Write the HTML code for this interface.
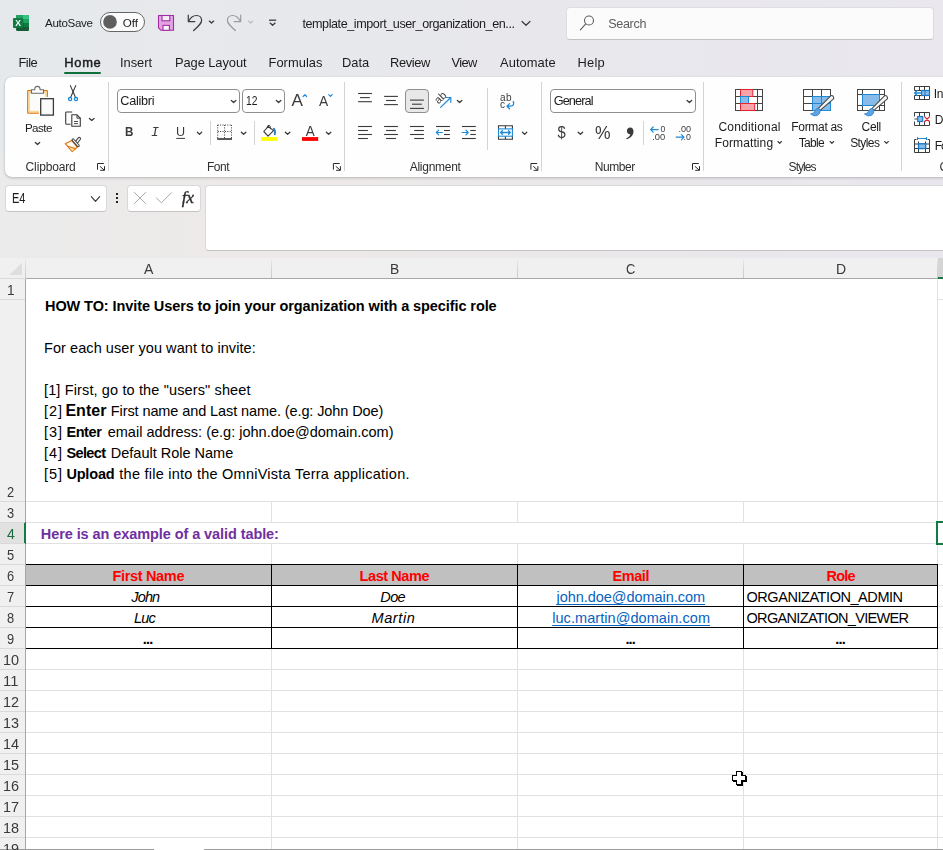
<!DOCTYPE html>
<html lang="en">
<head>
<meta charset="utf-8">
<title>template_import_user_organization_en - Excel</title>
<style>
html,body{margin:0;padding:0;background:#fff;}
body{font-family:"Liberation Sans",sans-serif;}
#app{position:relative;width:943px;height:850px;overflow:hidden;background:linear-gradient(90deg,#e6e9eb 0%,#e8e8ec 55%,#eae7ef 100%);}
#fbar{position:absolute;left:0;top:150px;width:943px;height:108px;-webkit-mask-image:linear-gradient(to bottom,transparent 0,#000 30px);mask-image:linear-gradient(to bottom,transparent 0,#000 30px);background:linear-gradient(90deg,#ebebeb 0%,#ede9e8 30%,#ebe8ea 60%,#e9e6ee 100%);}
.t{position:absolute;white-space:nowrap;font-family:"Liberation Sans",sans-serif;margin:0;padding:0;}
a.t{cursor:pointer;}
#uitext{position:absolute;left:0;top:0;width:943px;height:258px;will-change:transform;}
#celltext{position:absolute;left:0;top:0;width:943px;height:850px;}
.abs{position:absolute;}
.ico{position:absolute;left:0;top:0;will-change:transform;}
</style>
</head>
<body>

<div id="app">
<div id="fbar"></div>
<!-- ribbon panel -->
<div class="abs" style="left:5px;top:77px;width:960px;height:100px;background:#fefefe;border-radius:7px 0 0 7px;box-shadow:0 1px 3px rgba(0,0,0,.22),0 0 1px rgba(0,0,0,.12)"></div>
<div class="abs" style="left:64.3px;top:72px;width:37px;height:2px;border-radius:1px;background:#0f7039"></div>
<div class="abs" style="left:566px;top:7px;width:366px;height:31px;background:#fbfbfb;border-radius:4px;border:1px solid #dddde0;border-bottom-color:#c2c2c6;box-sizing:content-box"></div>
<div class="abs" style="left:5px;top:185px;width:100px;height:25px;background:#fff;border-radius:4px;border:1px solid #d9d9d9;border-bottom-color:#c4c4c4;box-sizing:content-box"></div>
<div class="abs" style="left:127px;top:185px;width:72px;height:25px;background:#fff;border-radius:4px;border:1px solid #d9d9d9;border-bottom-color:#c4c4c4;box-sizing:content-box"></div>
<div class="abs" style="left:205px;top:185px;width:760px;height:64px;background:#fff;border-radius:4px 0 0 4px;border:1px solid #d9d9d9;border-bottom-color:#c4c4c4;box-sizing:content-box"></div>
<div class="abs" style="left:117px;top:89px;width:120.5px;height:22px;background:#fff;border-radius:4px;border:1px solid #8f8f8f;box-sizing:content-box"></div>
<div class="abs" style="left:242px;top:89px;width:40.5px;height:22px;background:#fff;border-radius:4px;border:1px solid #8f8f8f;box-sizing:content-box"></div>
<div class="abs" style="left:550px;top:89px;width:144px;height:22px;background:#fff;border-radius:4px;border:1px solid #8f8f8f;box-sizing:content-box"></div>
<div class="abs" style="left:405px;top:89px;width:22px;height:22px;background:#e8e8e8;border-radius:4px;border:1px solid #8f8f8f;box-sizing:content-box"></div>
<div class="abs" style="left:108px;top:82px;width:1px;height:89px;background:#d4d4d4"></div>
<div class="abs" style="left:344px;top:82px;width:1px;height:89px;background:#d4d4d4"></div>
<div class="abs" style="left:541px;top:82px;width:1px;height:89px;background:#d4d4d4"></div>
<div class="abs" style="left:703px;top:82px;width:1px;height:89px;background:#d4d4d4"></div>
<div class="abs" style="left:901px;top:82px;width:1px;height:89px;background:#d4d4d4"></div>
<div class="abs" style="left:210px;top:121px;width:1px;height:24px;background:#d4d4d4"></div>
<div class="abs" style="left:254px;top:121px;width:1px;height:24px;background:#d4d4d4"></div>
<div class="abs" style="left:643px;top:121px;width:1px;height:24px;background:#d4d4d4"></div>
<div class="abs" style="left:487px;top:88px;width:1px;height:62px;background:#d4d4d4"></div>
<!-- sheet -->
<div class="abs" style="left:0;top:258px;width:943px;height:20px;background:#f0f0f0"></div>
<div class="abs" style="left:938px;top:258px;width:5px;height:20px;background:#d5d5d5"></div>
<div class="abs" style="left:0;top:278px;width:26px;height:1px;background:#dcdcdc"></div>
<div class="abs" style="left:26px;top:278px;width:917px;height:1px;background:#a8a8a8"></div>
<div class="abs" style="left:938px;top:277px;width:5px;height:2px;background:#107c41"></div>
<div class="abs" style="left:25px;top:259px;width:1px;height:19px;background:linear-gradient(#eaeaea,#d2d2d2 60%,#cacaca)"></div>
<div class="abs" style="left:271px;top:259px;width:1px;height:19px;background:linear-gradient(#eaeaea,#d2d2d2 60%,#cacaca)"></div>
<div class="abs" style="left:517px;top:259px;width:1px;height:19px;background:linear-gradient(#eaeaea,#d2d2d2 60%,#cacaca)"></div>
<div class="abs" style="left:743px;top:259px;width:1px;height:19px;background:linear-gradient(#eaeaea,#d2d2d2 60%,#cacaca)"></div>
<div class="abs" style="left:937px;top:259px;width:1px;height:19px;background:linear-gradient(#eaeaea,#d2d2d2 60%,#cacaca)"></div>
<svg class="abs" style="left:9px;top:262px" width="14" height="14" viewBox="0 0 14 14"><path d="M13 0.4V13H0.4Z" fill="#dedede"/></svg>
<div class="abs" style="left:26px;top:279px;width:917px;height:571px;background:#fff"></div>
<div class="abs" style="left:0;top:279px;width:25px;height:571px;background:#f0f0f0"></div>
<div class="abs" style="left:0;top:523px;width:25px;height:20px;background:#e1e1e1"></div>
<div class="abs" style="left:25px;top:279px;width:1px;height:571px;background:#a6a6a6"></div>
<div class="abs" style="left:24px;top:522px;width:2px;height:22px;background:#107c41"></div>
<div class="abs" style="left:0;top:299px;width:25px;height:1px;background:#d9d9d9"></div>
<div class="abs" style="left:0;top:501px;width:25px;height:1px;background:#d9d9d9"></div>
<div class="abs" style="left:0;top:522px;width:25px;height:1px;background:#d9d9d9"></div>
<div class="abs" style="left:0;top:543px;width:25px;height:1px;background:#d9d9d9"></div>
<div class="abs" style="left:0;top:564px;width:25px;height:1px;background:#d9d9d9"></div>
<div class="abs" style="left:0;top:585px;width:25px;height:1px;background:#d9d9d9"></div>
<div class="abs" style="left:0;top:606px;width:25px;height:1px;background:#d9d9d9"></div>
<div class="abs" style="left:0;top:627px;width:25px;height:1px;background:#d9d9d9"></div>
<div class="abs" style="left:0;top:648px;width:25px;height:1px;background:#d9d9d9"></div>
<div class="abs" style="left:0;top:669px;width:25px;height:1px;background:#d9d9d9"></div>
<div class="abs" style="left:0;top:690px;width:25px;height:1px;background:#d9d9d9"></div>
<div class="abs" style="left:0;top:711px;width:25px;height:1px;background:#d9d9d9"></div>
<div class="abs" style="left:0;top:732px;width:25px;height:1px;background:#d9d9d9"></div>
<div class="abs" style="left:0;top:753px;width:25px;height:1px;background:#d9d9d9"></div>
<div class="abs" style="left:0;top:774px;width:25px;height:1px;background:#d9d9d9"></div>
<div class="abs" style="left:0;top:795px;width:25px;height:1px;background:#d9d9d9"></div>
<div class="abs" style="left:0;top:816px;width:25px;height:1px;background:#d9d9d9"></div>
<div class="abs" style="left:0;top:837px;width:25px;height:1px;background:#d9d9d9"></div>
<div class="abs" style="left:938px;top:299px;width:5px;height:1px;background:#e1e1e1"></div>
<div class="abs" style="left:26px;top:501px;width:917px;height:1px;background:#e1e1e1"></div>
<div class="abs" style="left:26px;top:522px;width:917px;height:1px;background:#e1e1e1"></div>
<div class="abs" style="left:26px;top:543px;width:917px;height:1px;background:#e1e1e1"></div>
<div class="abs" style="left:26px;top:564px;width:917px;height:1px;background:#e1e1e1"></div>
<div class="abs" style="left:26px;top:585px;width:917px;height:1px;background:#e1e1e1"></div>
<div class="abs" style="left:26px;top:606px;width:917px;height:1px;background:#e1e1e1"></div>
<div class="abs" style="left:26px;top:627px;width:917px;height:1px;background:#e1e1e1"></div>
<div class="abs" style="left:26px;top:648px;width:917px;height:1px;background:#e1e1e1"></div>
<div class="abs" style="left:26px;top:669px;width:917px;height:1px;background:#e1e1e1"></div>
<div class="abs" style="left:26px;top:690px;width:917px;height:1px;background:#e1e1e1"></div>
<div class="abs" style="left:26px;top:711px;width:917px;height:1px;background:#e1e1e1"></div>
<div class="abs" style="left:26px;top:732px;width:917px;height:1px;background:#e1e1e1"></div>
<div class="abs" style="left:26px;top:753px;width:917px;height:1px;background:#e1e1e1"></div>
<div class="abs" style="left:26px;top:774px;width:917px;height:1px;background:#e1e1e1"></div>
<div class="abs" style="left:26px;top:795px;width:917px;height:1px;background:#e1e1e1"></div>
<div class="abs" style="left:26px;top:816px;width:917px;height:1px;background:#e1e1e1"></div>
<div class="abs" style="left:26px;top:837px;width:917px;height:1px;background:#e1e1e1"></div>
<div class="abs" style="left:937px;top:279px;width:1px;height:571px;background:#e1e1e1"></div>
<div class="abs" style="left:271px;top:502px;width:1px;height:20px;background:#e1e1e1"></div>
<div class="abs" style="left:271px;top:544px;width:1px;height:20px;background:#e1e1e1"></div>
<div class="abs" style="left:271px;top:649px;width:1px;height:201px;background:#e1e1e1"></div>
<div class="abs" style="left:517px;top:502px;width:1px;height:20px;background:#e1e1e1"></div>
<div class="abs" style="left:517px;top:544px;width:1px;height:20px;background:#e1e1e1"></div>
<div class="abs" style="left:517px;top:649px;width:1px;height:201px;background:#e1e1e1"></div>
<div class="abs" style="left:743px;top:502px;width:1px;height:20px;background:#e1e1e1"></div>
<div class="abs" style="left:743px;top:544px;width:1px;height:20px;background:#e1e1e1"></div>
<div class="abs" style="left:743px;top:649px;width:1px;height:201px;background:#e1e1e1"></div>
<div class="abs" style="left:26px;top:565px;width:912px;height:20px;background:#c0c0c0"></div>
<div class="abs" style="left:26px;top:564px;width:912px;height:1px;background:#000"></div>
<div class="abs" style="left:26px;top:585px;width:912px;height:1px;background:#000"></div>
<div class="abs" style="left:26px;top:606px;width:912px;height:1px;background:#000"></div>
<div class="abs" style="left:26px;top:627px;width:912px;height:1px;background:#000"></div>
<div class="abs" style="left:26px;top:648px;width:912px;height:1px;background:#000"></div>
<div class="abs" style="left:271px;top:564px;width:1px;height:85px;background:#000"></div>
<div class="abs" style="left:517px;top:564px;width:1px;height:85px;background:#000"></div>
<div class="abs" style="left:743px;top:564px;width:1px;height:85px;background:#000"></div>
<div class="abs" style="left:937px;top:564px;width:1px;height:85px;background:#000"></div>
<div class="abs" style="left:936px;top:521px;width:10px;height:20px;border:2px solid #107c41;background:#fff"></div>
<div class="abs" style="left:0;top:849px;width:154px;height:1px;background:#9c9c9c"></div>
<div class="abs" style="left:154px;top:849px;width:50px;height:1px;background:#fff"></div>
<div class="abs" style="left:204px;top:849px;width:739px;height:1px;background:#9c9c9c"></div>
<svg class="abs" style="left:730px;top:769px" width="20" height="20" viewBox="730 769 20 20" shape-rendering="crispEdges"><rect x="737" y="772" width="6" height="14" fill="#000"/><rect x="733" y="776" width="14" height="6" fill="#000"/><rect x="736" y="771" width="6" height="14" fill="#000"/><rect x="732" y="775" width="14" height="6" fill="#000"/><rect x="737" y="772" width="4" height="12" fill="#fff"/><rect x="733" y="776" width="12" height="4" fill="#fff"/></svg>
<!-- text -->
<div id="celltext">
<span class="t" style="left:143.70px;top:262px;font-size:14.5px;line-height:14.5px;letter-spacing:0.000px;color:#3a3a3a;transform:scaleX(0.9700);transform-origin:0 0">A</span>
<span class="t" style="left:390.25px;top:262px;font-size:14.5px;line-height:14.5px;letter-spacing:0.000px;color:#3a3a3a;transform:scaleX(0.9500);transform-origin:0 0">B</span>
<span class="t" style="left:626.30px;top:262px;font-size:14.5px;line-height:14.5px;letter-spacing:0.000px;color:#3a3a3a;transform:scaleX(0.8900);transform-origin:0 0">C</span>
<span class="t" style="left:836.23px;top:262px;font-size:14.5px;line-height:14.5px;letter-spacing:0.000px;color:#3a3a3a;transform:scaleX(0.9667);transform-origin:0 0">D</span>
<span class="t" style="left:6.86px;top:283px;font-size:14.5px;line-height:14.5px;letter-spacing:0.000px;color:#3a3a3a;transform:scaleX(0.9429);transform-origin:0 0">1</span>
<span class="t" style="left:7.40px;top:485px;font-size:14.5px;line-height:14.5px;letter-spacing:0.000px;color:#3a3a3a;transform:scaleX(0.8875);transform-origin:0 0">2</span>
<span class="t" style="left:7.40px;top:506px;font-size:14.5px;line-height:14.5px;letter-spacing:0.000px;color:#3a3a3a;transform:scaleX(0.8875);transform-origin:0 0">3</span>
<span class="t" style="left:6.60px;top:527px;font-size:14.5px;line-height:14.5px;letter-spacing:0.000px;color:#1e6b41;transform:scaleX(0.9750);transform-origin:0 0">4</span>
<span class="t" style="left:7.40px;top:548px;font-size:14.5px;line-height:14.5px;letter-spacing:0.000px;color:#3a3a3a;transform:scaleX(0.8875);transform-origin:0 0">5</span>
<span class="t" style="left:7.40px;top:569px;font-size:14.5px;line-height:14.5px;letter-spacing:0.000px;color:#3a3a3a;transform:scaleX(0.8875);transform-origin:0 0">6</span>
<span class="t" style="left:7.40px;top:590px;font-size:14.5px;line-height:14.5px;letter-spacing:0.000px;color:#3a3a3a;transform:scaleX(0.8875);transform-origin:0 0">7</span>
<span class="t" style="left:7.40px;top:611px;font-size:14.5px;line-height:14.5px;letter-spacing:0.000px;color:#3a3a3a;transform:scaleX(0.8875);transform-origin:0 0">8</span>
<span class="t" style="left:7.40px;top:632px;font-size:14.5px;line-height:14.5px;letter-spacing:0.000px;color:#3a3a3a;transform:scaleX(0.8875);transform-origin:0 0">9</span>
<span class="t" style="left:2.90px;top:653px;font-size:14.5px;line-height:14.5px;letter-spacing:0.000px;color:#3a3a3a;transform:scaleX(0.9957);transform-origin:0 0">10</span>
<span class="t" style="left:2.88px;top:674px;font-size:14.5px;line-height:14.5px;letter-spacing:0.000px;color:#3a3a3a;transform:scaleX(1.0223);transform-origin:0 0">11</span>
<span class="t" style="left:2.90px;top:695px;font-size:14.5px;line-height:14.5px;letter-spacing:0.000px;color:#3a3a3a;transform:scaleX(0.9957);transform-origin:0 0">12</span>
<span class="t" style="left:2.90px;top:716px;font-size:14.5px;line-height:14.5px;letter-spacing:0.000px;color:#3a3a3a;transform:scaleX(0.9957);transform-origin:0 0">13</span>
<span class="t" style="left:2.90px;top:737px;font-size:14.5px;line-height:14.5px;letter-spacing:0.000px;color:#3a3a3a;transform:scaleX(0.9957);transform-origin:0 0">14</span>
<span class="t" style="left:2.90px;top:758px;font-size:14.5px;line-height:14.5px;letter-spacing:0.000px;color:#3a3a3a;transform:scaleX(0.9957);transform-origin:0 0">15</span>
<span class="t" style="left:2.90px;top:779px;font-size:14.5px;line-height:14.5px;letter-spacing:0.000px;color:#3a3a3a;transform:scaleX(0.9957);transform-origin:0 0">16</span>
<span class="t" style="left:2.90px;top:800px;font-size:14.5px;line-height:14.5px;letter-spacing:0.000px;color:#3a3a3a;transform:scaleX(0.9957);transform-origin:0 0">17</span>
<span class="t" style="left:2.90px;top:821px;font-size:14.5px;line-height:14.5px;letter-spacing:0.000px;color:#3a3a3a;transform:scaleX(0.9957);transform-origin:0 0">18</span>
<span class="t" style="left:2.90px;top:842px;font-size:14.5px;line-height:14.5px;letter-spacing:0.000px;color:#3a3a3a;transform:scaleX(0.9957);transform-origin:0 0">19</span>
<span class="t" style="left:45.00px;top:299px;font-size:14.5px;line-height:14.5px;letter-spacing:-0.086px;color:#000;font-weight:700">HOW TO: Invite Users to join your organization with a specific role</span>
<span class="t" style="left:44.00px;top:341px;font-size:14.5px;line-height:14.5px;letter-spacing:0.068px;color:#000">For each user you want to invite:</span>
<span class="t" style="left:44.00px;top:383px;font-size:14.5px;line-height:14.5px;letter-spacing:0.134px;color:#000">[1] First, go to the &quot;users&quot; sheet</span>
<span class="t" style="left:44.00px;top:404px;font-size:14.5px;line-height:14.5px;letter-spacing:0.954px;color:#000">[2]</span>
<span class="t" style="left:65.40px;top:403px;font-size:16px;line-height:16px;letter-spacing:0.057px;color:#000;font-weight:700">Enter</span>
<span class="t" style="left:110.80px;top:404px;font-size:14.5px;line-height:14.5px;letter-spacing:-0.098px;color:#000">First name and Last name. (e.g: John Doe)</span>
<span class="t" style="left:44.00px;top:425px;font-size:14.5px;line-height:14.5px;letter-spacing:0.954px;color:#000">[3]</span>
<span class="t" style="left:66.40px;top:425px;font-size:14.5px;line-height:14.5px;letter-spacing:-0.405px;color:#000;font-weight:700">Enter</span>
<span class="t" style="left:107.70px;top:425px;font-size:14.5px;line-height:14.5px;letter-spacing:0.008px;color:#000">email address: (e.g: john.doe@domain.com)</span>
<span class="t" style="left:44.00px;top:446px;font-size:14.5px;line-height:14.5px;letter-spacing:0.954px;color:#000">[4]</span>
<span class="t" style="left:66.40px;top:446px;font-size:14.5px;line-height:14.5px;letter-spacing:-0.599px;color:#000;font-weight:700">Select</span>
<span class="t" style="left:110.80px;top:446px;font-size:14.5px;line-height:14.5px;letter-spacing:-0.002px;color:#000">Default Role Name</span>
<span class="t" style="left:44.00px;top:467px;font-size:14.5px;line-height:14.5px;letter-spacing:0.954px;color:#000">[5]</span>
<span class="t" style="left:66.40px;top:467px;font-size:14.5px;line-height:14.5px;letter-spacing:-0.176px;color:#000;font-weight:700">Upload</span>
<span class="t" style="left:119.30px;top:467px;font-size:14.5px;line-height:14.5px;letter-spacing:0.245px;color:#000">the file into the OmniVista Terra application.</span>
<span class="t" style="left:40.80px;top:527px;font-size:14.5px;line-height:14.5px;letter-spacing:-0.081px;color:#7030a0;font-weight:700">Here is an example of a valid table:</span>
<span class="t" style="left:112.40px;top:569px;font-size:14.5px;line-height:14.5px;letter-spacing:-0.320px;color:#ff0000;font-weight:700">First Name</span>
<span class="t" style="left:359.60px;top:569px;font-size:14.5px;line-height:14.5px;letter-spacing:-0.434px;color:#ff0000;font-weight:700">Last Name</span>
<span class="t" style="left:612.60px;top:569px;font-size:14.5px;line-height:14.5px;letter-spacing:-0.464px;color:#ff0000;font-weight:700">Email</span>
<span class="t" style="left:826.50px;top:569px;font-size:14.5px;line-height:14.5px;letter-spacing:-0.752px;color:#ff0000;font-weight:700">Role</span>
<span class="t" style="left:131.30px;top:590px;font-size:14.5px;line-height:14.5px;letter-spacing:-0.859px;color:#000;font-style:italic">John</span>
<span class="t" style="left:380.30px;top:590px;font-size:14.5px;line-height:14.5px;letter-spacing:-0.618px;color:#000;font-style:italic">Doe</span>
<span class="t" style="left:134.00px;top:611px;font-size:14.5px;line-height:14.5px;letter-spacing:-0.814px;color:#000;font-style:italic">Luc</span>
<span class="t" style="left:371.50px;top:611px;font-size:14.5px;line-height:14.5px;letter-spacing:0.596px;color:#000;font-style:italic">Martin</span>
<a class="t" style="left:556.60px;top:590px;font-size:14.5px;line-height:14.5px;letter-spacing:-0.047px;color:#0563c1;text-decoration:underline;text-underline-offset:2px;text-decoration-thickness:1px;text-decoration-skip-ink:none">john.doe@domain.com</a>
<a class="t" style="left:552.20px;top:611px;font-size:14.5px;line-height:14.5px;letter-spacing:0.062px;color:#0563c1;text-decoration:underline;text-underline-offset:2px;text-decoration-thickness:1px;text-decoration-skip-ink:none">luc.martin@domain.com</a>
<span class="t" style="left:746.50px;top:590px;font-size:14.5px;line-height:14.5px;letter-spacing:-0.441px;color:#000">ORGANIZATION_ADMIN</span>
<span class="t" style="left:746.50px;top:611px;font-size:14.5px;line-height:14.5px;letter-spacing:-0.666px;color:#000">ORGANIZATION_VIEWER</span>
<span class="t" style="left:142.80px;top:632px;font-size:14.5px;line-height:14.5px;letter-spacing:-0.829px;color:#000;font-weight:700">...</span>
<span class="t" style="left:625.40px;top:632px;font-size:14.5px;line-height:14.5px;letter-spacing:-0.829px;color:#000;font-weight:700">...</span>
<span class="t" style="left:835.30px;top:632px;font-size:14.5px;line-height:14.5px;letter-spacing:-0.829px;color:#000;font-weight:700">...</span>
</div>
<!-- icons -->
<svg class="ico" width="943" height="258" viewBox="0 0 943 258">
<g><rect x="16.1" y="14.9" width="12.9" height="16.1" rx="1" fill="#185c37"/><path d="M17.1 14.9H22.5V19H16.1V15.9Q16.1 14.9 17.1 14.9Z" fill="#21a366"/><path d="M22.5 14.9H28Q29 14.9 29 15.9V19H22.5Z" fill="#33c481"/><rect x="16.1" y="19" width="6.4" height="4" fill="#107c41"/><rect x="22.5" y="19" width="6.5" height="4" fill="#21a366"/><rect x="16.1" y="23" width="6.4" height="4" fill="#185c37"/><rect x="22.5" y="23" width="6.5" height="4" fill="#107c41"/><rect x="13.6" y="18.6" width="10" height="10" rx="1" fill="#000" opacity=".18"/><rect x="13" y="18" width="10" height="10" rx="1" fill="#107c41"/><text x="18" y="26" font-family="Liberation Sans, sans-serif" font-weight="700" font-size="8.6" fill="#fff" text-anchor="middle">X</text></g>
<rect x="100.5" y="12.5" width="44" height="19" rx="9.5" fill="#fcfcfc" stroke="#666" stroke-width="1"/>
<circle cx="110" cy="21.9" r="6.8" fill="#5f5f5f"/>
<path d="M158.5 15.5H173.5V30.3H161L158.5 27.8Z" fill="#e2a3e2" stroke="#a32ca3" stroke-width="1.1" stroke-linejoin="round"/>
<rect x="162" y="15.5" width="7.8" height="5.3" fill="#f6eef6" stroke="#a32ca3" stroke-width="1.1"/>
<rect x="163" y="25.4" width="6.4" height="4.9" fill="#fbf7fb" stroke="#a32ca3" stroke-width="1.1"/>
<path d="M188.3 15.2V21.6H194.8" fill="none" stroke="#3b3b3b" stroke-width="1.2" stroke-linecap="round" stroke-linejoin="round"/>
<path d="M188.5 21.4C190.5 17.3 193.6 15.5 196.6 15.5C199.8 15.5 201.6 17.9 201.6 20.4C201.6 23 199.8 24.8 193.6 30.5" fill="none" stroke="#3b3b3b" stroke-width="1.2" stroke-linecap="round"/>
<path d="M209.35 21.10L211.50 23.05L213.65 21.10" fill="none" stroke="#3b3b3b" stroke-width="1.3" stroke-linecap="round" stroke-linejoin="round"/>
<path d="M240.7 15.2V21.6H234.2" fill="none" stroke="#9a9a9a" stroke-width="1.2" stroke-linecap="round" stroke-linejoin="round"/>
<path d="M240.5 21.4C238.5 17.3 235.4 15.5 232.4 15.5C229.2 15.5 227.4 17.9 227.4 20.4C227.4 23 229.2 24.8 235.4 30.5" fill="none" stroke="#9a9a9a" stroke-width="1.2" stroke-linecap="round"/>
<path d="M248.45 21.10L250.60 23.05L252.75 21.10" fill="none" stroke="#bdbdbd" stroke-width="1.3" stroke-linecap="round" stroke-linejoin="round"/>
<path d="M269 20.2L276.2 20.2" stroke="#3b3b3b" stroke-width="1.3" stroke-linecap="butt" fill="none"/>
<path d="M270.15 23.10L272.60 25.35L275.05 23.10" fill="none" stroke="#3b3b3b" stroke-width="1.3" stroke-linecap="round" stroke-linejoin="round"/>
<path d="M522.05 21.50L526.00 25.25L529.95 21.50" fill="none" stroke="#3b3b3b" stroke-width="1.2" stroke-linecap="round" stroke-linejoin="round"/>
<circle cx="589" cy="20.5" r="4.5" fill="none" stroke="#5f5f5f" stroke-width="1.1"/>
<path d="M585.7 23.9L580.4 29.8" stroke="#5f5f5f" stroke-width="1.1" stroke-linecap="round" fill="none"/>
<rect x="27.75" y="90.65" width="19.55" height="22.4" rx="0.6" fill="#fbfbfa" stroke="#e3730a" stroke-width="1.3"/>
<rect x="29.2" y="92.1" width="16.65" height="19.5" fill="none" stroke="#fbd98c" stroke-width="1.6"/>
<path d="M31.4 93.2V89.7H34.7C34.7 87.7 35.8 86.4 37.4 86.4C39 86.4 40.1 87.7 40.1 89.7H43.5V93.2Z" fill="#fff" stroke="#6a6a6a" stroke-width="1.1" stroke-linejoin="round"/>
<rect x="38.9" y="96.9" width="16" height="19" fill="#fefefe"/>
<rect x="40.7" y="98.7" width="12.7" height="16.4" fill="#fafafa" stroke="#3b3b3b" stroke-width="1.3"/>
<path d="M35.35 142.50L37.50 144.45L39.65 142.50" fill="none" stroke="#3b3b3b" stroke-width="1.3" stroke-linecap="round" stroke-linejoin="round"/>
<path d="M70.4 85.6L75.4 97.3" stroke="#3b3b3b" stroke-width="1.1" stroke-linecap="round" fill="none"/>
<path d="M75.7 85.6L70.7 97.3" stroke="#3b3b3b" stroke-width="1.1" stroke-linecap="round" fill="none"/>
<circle cx="70.1" cy="99.1" r="1.6" fill="none" stroke="#1e8ad6" stroke-width="1.3"/>
<circle cx="76" cy="99.1" r="1.6" fill="none" stroke="#1e8ad6" stroke-width="1.3"/>
<path d="M72.2 112H66.5Q65.7 112 65.7 112.8V123.4Q65.7 124.2 66.5 124.2H70.6" fill="#fafafa" stroke="#3b3b3b" stroke-width="1.1"/>
<path d="M71.8 114.8H77L80.3 118.2V126.2H71.8Z" fill="#fafafa" stroke="#3b3b3b" stroke-width="1.1" stroke-linejoin="round"/>
<path d="M77 114.8V118.2H80.3" fill="none" stroke="#3b3b3b" stroke-width="1"/>
<path d="M74 121.5L78 121.5" stroke="#3b3b3b" stroke-width="0.9" stroke-linecap="butt" fill="none"/>
<path d="M74 123.6L78 123.6" stroke="#3b3b3b" stroke-width="0.9" stroke-linecap="butt" fill="none"/>
<path d="M89.45 118.50L91.75 120.45L94.05 118.50" fill="none" stroke="#3b3b3b" stroke-width="1.3" stroke-linecap="round" stroke-linejoin="round"/>
<path d="M71.9 140.5L65.3 143.7L72.2 151.6L77.3 147Z" fill="#fdfcfa" stroke="#e3730a" stroke-width="1.2" stroke-linejoin="round"/>
<path d="M70 148.2L74.6 149.4L72.2 151Z" fill="#fbd98c"/>
<path d="M67.6 146.3L75.4 148.6" fill="none" stroke="#e3730a" stroke-width="1.1"/>
<path d="M76.5 142.2L79.3 138.7" fill="none" stroke="#3b3b3b" stroke-width="3.5" stroke-linecap="round"/>
<path d="M76.5 142.2L79.3 138.7" fill="none" stroke="#fafafa" stroke-width="1.5" stroke-linecap="round"/>
<path d="M73.1 139.9L78.2 145.7" fill="none" stroke="#3b3b3b" stroke-width="3.1" stroke-linecap="round"/>
<path d="M73.1 139.9L78.2 145.7" fill="none" stroke="#fafafa" stroke-width="1.1" stroke-linecap="round"/>
<path d="M97.5 169.7V163.5H103.8" fill="none" stroke="#2a2a2a" stroke-width="1"/>
<path d="M99.9 166.3L104.3 170.2" fill="none" stroke="#2a2a2a" stroke-width="1"/>
<path d="M100.2 170.3H104.5V166.2" fill="none" stroke="#2a2a2a" stroke-width="1"/>
<path d="M333.4 169.7V163.5H339.7" fill="none" stroke="#2a2a2a" stroke-width="1"/>
<path d="M335.8 166.3L340.2 170.2" fill="none" stroke="#2a2a2a" stroke-width="1"/>
<path d="M336.1 170.3H340.4V166.2" fill="none" stroke="#2a2a2a" stroke-width="1"/>
<path d="M530.9 169.7V163.5H537.2" fill="none" stroke="#2a2a2a" stroke-width="1"/>
<path d="M533.3 166.3L537.7 170.2" fill="none" stroke="#2a2a2a" stroke-width="1"/>
<path d="M533.6 170.3H537.9V166.2" fill="none" stroke="#2a2a2a" stroke-width="1"/>
<path d="M692.5 169.7V163.5H698.8" fill="none" stroke="#2a2a2a" stroke-width="1"/>
<path d="M694.9 166.3L699.3 170.2" fill="none" stroke="#2a2a2a" stroke-width="1"/>
<path d="M695.2 170.3H699.5V166.2" fill="none" stroke="#2a2a2a" stroke-width="1"/>
<path d="M231.35 100.50L233.60 102.55L235.85 100.50" fill="none" stroke="#3b3b3b" stroke-width="1.3" stroke-linecap="round" stroke-linejoin="round"/>
<path d="M276.35 100.50L278.60 102.55L280.85 100.50" fill="none" stroke="#3b3b3b" stroke-width="1.3" stroke-linecap="round" stroke-linejoin="round"/>
<text x="124.9" y="136.2" font-family="Liberation Sans, sans-serif" font-weight="700" font-size="13.6" fill="#3b3b3b" textLength="8.4" lengthAdjust="spacingAndGlyphs">B</text>
<text x="150.9" y="136.2" font-family="Liberation Mono, monospace" font-style="italic" font-size="13.4" fill="#3b3b3b">I</text>
<text x="175.9" y="136.2" font-family="Liberation Sans, sans-serif" font-size="12.6" fill="#3b3b3b">U</text>
<path d="M176.3 138.4L185 138.4" stroke="#3b3b3b" stroke-width="1" stroke-linecap="butt" fill="none"/>
<path d="M197.35 132.30L199.50 134.35L201.65 132.30" fill="none" stroke="#3b3b3b" stroke-width="1.3" stroke-linecap="round" stroke-linejoin="round"/>
<text x="291.4" y="105.5" font-family="Liberation Sans, sans-serif" font-size="17.2" fill="#3b3b3b">A</text>
<path d="M303.15 96.50L304.90 94.75L306.65 96.50" fill="none" stroke="#1e8ad6" stroke-width="1.2" stroke-linecap="round" stroke-linejoin="round"/>
<text x="319.1" y="105.5" font-family="Liberation Sans, sans-serif" font-size="13.8" fill="#3b3b3b">A</text>
<path d="M328.75 94.60L330.50 96.35L332.25 94.60" fill="none" stroke="#1e8ad6" stroke-width="1.2" stroke-linecap="round" stroke-linejoin="round"/>
<g stroke="#3b3b3b" stroke-width="1" stroke-dasharray="1 1.4" fill="none"><path d="M217.7 125H231.7"/><path d="M217.7 125V138"/><path d="M231.5 125V138"/><path d="M224.6 125V138"/><path d="M217.7 131.5H231.7"/></g>
<path d="M217.2 139L232 139" stroke="#222" stroke-width="1.5" stroke-linecap="butt" fill="none"/>
<path d="M241.35 132.30L243.60 134.35L245.85 132.30" fill="none" stroke="#3b3b3b" stroke-width="1.3" stroke-linecap="round" stroke-linejoin="round"/>
<path d="M263.8 131.5L268.3 126.3L273.5 130.7L268.1 136.1Z" fill="#fff" stroke="#3b3b3b" stroke-width="1.1" stroke-linejoin="round"/>
<path d="M267 127.7Q267.5 124.9 269.2 125.2Q270.6 125.6 270.3 129.2" fill="none" stroke="#3b3b3b" stroke-width="1"/>
<path d="M273.7 128.7Q275.7 130.6 274.8 134.2" fill="none" stroke="#1a78c8" stroke-width="1.7" stroke-linecap="round"/>
<rect x="261" y="137.1" width="16.3" height="3.8" fill="#ffff00"/>
<path d="M285.35 132.30L287.60 134.35L289.85 132.30" fill="none" stroke="#3b3b3b" stroke-width="1.3" stroke-linecap="round" stroke-linejoin="round"/>
<text x="305.8" y="135.8" font-family="Liberation Sans, sans-serif" font-size="15" fill="#3b3b3b" textLength="9" lengthAdjust="spacingAndGlyphs">A</text>
<rect x="302" y="137.1" width="16.2" height="3.8" fill="#ff0000"/>
<path d="M326.35 132.30L328.60 134.35L330.85 132.30" fill="none" stroke="#3b3b3b" stroke-width="1.3" stroke-linecap="round" stroke-linejoin="round"/>
<path d="M358.1 93.5L371.9 93.5" stroke="#3b3b3b" stroke-width="1.1" stroke-linecap="butt" fill="none"/>
<path d="M360 97.6L369.8 97.6" stroke="#3b3b3b" stroke-width="1.1" stroke-linecap="butt" fill="none"/>
<path d="M358.1 101.7L371.9 101.7" stroke="#3b3b3b" stroke-width="1.1" stroke-linecap="butt" fill="none"/>
<path d="M384.1 96.4L397.9 96.4" stroke="#3b3b3b" stroke-width="1.1" stroke-linecap="butt" fill="none"/>
<path d="M386 100.5L395.8 100.5" stroke="#3b3b3b" stroke-width="1.1" stroke-linecap="butt" fill="none"/>
<path d="M384.1 104.6L397.9 104.6" stroke="#3b3b3b" stroke-width="1.1" stroke-linecap="butt" fill="none"/>
<path d="M410 100.1L423.9 100.1" stroke="#3b3b3b" stroke-width="1.1" stroke-linecap="butt" fill="none"/>
<path d="M412 104.2L421.8 104.2" stroke="#3b3b3b" stroke-width="1.1" stroke-linecap="butt" fill="none"/>
<path d="M410 108.4L423.9 108.4" stroke="#3b3b3b" stroke-width="1.1" stroke-linecap="butt" fill="none"/>
<text transform="translate(438.6,104.6) rotate(-45)" font-family="Liberation Sans, sans-serif" font-size="11" fill="#3b3b3b">ab</text>
<path d="M440.6 107.4L450.5 97.8" fill="none" stroke="#1e8ad6" stroke-width="1.2" stroke-linecap="round"/>
<path d="M445.9 97.5H450.8V102.3" fill="none" stroke="#1e8ad6" stroke-width="1.2" stroke-linecap="round" stroke-linejoin="round"/>
<path d="M457.35 100.50L459.60 102.55L461.85 100.50" fill="none" stroke="#3b3b3b" stroke-width="1.3" stroke-linecap="round" stroke-linejoin="round"/>
<path d="M358.1 126.5L371.9 126.5" stroke="#3b3b3b" stroke-width="1.1" stroke-linecap="butt" fill="none"/>
<path d="M358.1 130.5L367.9 130.5" stroke="#3b3b3b" stroke-width="1.1" stroke-linecap="butt" fill="none"/>
<path d="M358.1 134.5L371.9 134.5" stroke="#3b3b3b" stroke-width="1.1" stroke-linecap="butt" fill="none"/>
<path d="M358.1 138.5L367.9 138.5" stroke="#3b3b3b" stroke-width="1.1" stroke-linecap="butt" fill="none"/>
<path d="M384.1 126.5L397.9 126.5" stroke="#3b3b3b" stroke-width="1.1" stroke-linecap="butt" fill="none"/>
<path d="M386.1 130.5L395.9 130.5" stroke="#3b3b3b" stroke-width="1.1" stroke-linecap="butt" fill="none"/>
<path d="M384.1 134.5L397.9 134.5" stroke="#3b3b3b" stroke-width="1.1" stroke-linecap="butt" fill="none"/>
<path d="M386.1 138.5L395.9 138.5" stroke="#3b3b3b" stroke-width="1.1" stroke-linecap="butt" fill="none"/>
<path d="M410 126.5L423.9 126.5" stroke="#3b3b3b" stroke-width="1.1" stroke-linecap="butt" fill="none"/>
<path d="M414.2 130.5L423.9 130.5" stroke="#3b3b3b" stroke-width="1.1" stroke-linecap="butt" fill="none"/>
<path d="M410 134.5L423.9 134.5" stroke="#3b3b3b" stroke-width="1.1" stroke-linecap="butt" fill="none"/>
<path d="M414.2 138.5L423.9 138.5" stroke="#3b3b3b" stroke-width="1.1" stroke-linecap="butt" fill="none"/>
<path d="M436 126.5L449.9 126.5" stroke="#3b3b3b" stroke-width="1.1" stroke-linecap="butt" fill="none"/>
<path d="M444 130.5L449.9 130.5" stroke="#3b3b3b" stroke-width="1.1" stroke-linecap="butt" fill="none"/>
<path d="M444 134.5L449.9 134.5" stroke="#3b3b3b" stroke-width="1.1" stroke-linecap="butt" fill="none"/>
<path d="M436 138.5L449.9 138.5" stroke="#3b3b3b" stroke-width="1.1" stroke-linecap="butt" fill="none"/>
<path d="M442.4 132.5H436.4M438.7 130.2L436.4 132.5L438.7 134.8" fill="none" stroke="#1e8ad6" stroke-width="1.2" stroke-linecap="round" stroke-linejoin="round"/>
<path d="M462 126.5L475.8 126.5" stroke="#3b3b3b" stroke-width="1.1" stroke-linecap="butt" fill="none"/>
<path d="M470.3 130.5L475.8 130.5" stroke="#3b3b3b" stroke-width="1.1" stroke-linecap="butt" fill="none"/>
<path d="M470.3 134.5L475.8 134.5" stroke="#3b3b3b" stroke-width="1.1" stroke-linecap="butt" fill="none"/>
<path d="M462 138.5L475.8 138.5" stroke="#3b3b3b" stroke-width="1.1" stroke-linecap="butt" fill="none"/>
<path d="M462.2 132.5H468.2M465.9 130.2L468.2 132.5L465.9 134.8" fill="none" stroke="#1e8ad6" stroke-width="1.2" stroke-linecap="round" stroke-linejoin="round"/>
<text x="500" y="100.8" font-family="Liberation Sans, sans-serif" font-size="10" fill="#3b3b3b" letter-spacing="0.5">ab</text>
<text x="500" y="107.9" font-family="Liberation Sans, sans-serif" font-size="10" fill="#3b3b3b">c</text>
<path d="M513.3 101.5Q514.6 105.6 510.6 106.2H507.2M509.6 103.6L507 106.2L509.6 108.8" fill="none" stroke="#1e8ad6" stroke-width="1.3" stroke-linecap="round" stroke-linejoin="round"/>
<path d="M498.5 129V125.8H512.4V129M498.5 136V139.2H512.4V136M505.4 125.8V129M505.4 136V139.2" fill="none" stroke="#3b3b3b" stroke-width="1.1"/>
<rect x="498.5" y="128.9" width="13.9" height="7.3" fill="#fff" stroke="#1e8ad6" stroke-width="1.1"/>
<path d="M500.6 132.5H510.3M502.3 130.8L500.6 132.5L502.3 134.2M508.6 130.8L510.3 132.5L508.6 134.2" fill="none" stroke="#1e8ad6" stroke-width="1.3" stroke-linecap="round" stroke-linejoin="round"/>
<path d="M522.45 132.30L524.60 134.35L526.75 132.30" fill="none" stroke="#3b3b3b" stroke-width="1.3" stroke-linecap="round" stroke-linejoin="round"/>
<path d="M687.15 100.50L689.40 102.55L691.65 100.50" fill="none" stroke="#3b3b3b" stroke-width="1.3" stroke-linecap="round" stroke-linejoin="round"/>
<text x="557.4" y="138.2" font-family="Liberation Sans, sans-serif" font-size="17" fill="#3b3b3b" textLength="8.2" lengthAdjust="spacingAndGlyphs">$</text>
<path d="M578.15 132.30L580.40 134.35L582.65 132.30" fill="none" stroke="#3b3b3b" stroke-width="1.3" stroke-linecap="round" stroke-linejoin="round"/>
<text x="595" y="139.2" font-family="Liberation Sans, sans-serif" font-size="17.6" fill="#3b3b3b" textLength="15.6" lengthAdjust="spacingAndGlyphs">%</text>
<path d="M630.2 127.6C632.2 127.6 633.5 129.2 633.5 131.4C633.5 135 630.8 138 626.6 139.2L626.2 138.2C628.6 137.2 630 135.8 630.3 134.2C628.4 134.4 626.9 133 626.9 131C626.9 129 628.3 127.6 630.2 127.6Z" fill="#3b3b3b"/>
<path d="M658.2 129.6H650.6M653.2 127L650.6 129.6L653.2 132.2" fill="none" stroke="#1e8ad6" stroke-width="1.2" stroke-linecap="round" stroke-linejoin="round"/>
<text x="660.6" y="131.8" font-family="Liberation Sans, sans-serif" font-size="9.6" fill="#3b3b3b" lengthAdjust="spacingAndGlyphs" textLength="4.8">0</text>
<text x="652.2" y="139.9" font-family="Liberation Sans, sans-serif" font-size="9.6" fill="#3b3b3b" lengthAdjust="spacingAndGlyphs" textLength="13">.00</text>
<text x="678.4" y="131.8" font-family="Liberation Sans, sans-serif" font-size="9.6" fill="#3b3b3b" lengthAdjust="spacingAndGlyphs" textLength="12.6">.00</text>
<path d="M676.2 137.2H684M681.4 134.6L684 137.2L681.4 139.8" fill="none" stroke="#1e8ad6" stroke-width="1.2" stroke-linecap="round" stroke-linejoin="round"/>
<text x="683.6" y="139.9" font-family="Liberation Sans, sans-serif" font-size="9.6" fill="#3b3b3b" lengthAdjust="spacingAndGlyphs" textLength="7.4">.0</text>
<rect x="735.5" y="89.5" width="27" height="21" fill="#fff" stroke="#444" stroke-width="1"/>
<path d="M735.5 96.5H762.5M735.5 103.5H762.5M740.5 89.5V110.5M757.5 89.5V110.5" fill="none" stroke="#444" stroke-width="1"/>
<rect x="740.5" y="89.5" width="12.3" height="7" fill="#f9a3ab" stroke="#e3262e" stroke-width="1"/>
<rect x="740.5" y="96.5" width="8" height="7" fill="#86bbea" stroke="#1e8ad6" stroke-width="1"/>
<rect x="740.5" y="103.5" width="14.2" height="7" fill="#f9a3ab" stroke="#e3262e" stroke-width="1"/>
<path d="M777.95 141.50L779.70 143.35L781.45 141.50" fill="none" stroke="#3b3b3b" stroke-width="1.1" stroke-linecap="round" stroke-linejoin="round"/>
<rect x="803.5" y="89.5" width="27" height="21" fill="#fff" stroke="#444" stroke-width="1"/>
<rect x="812.5" y="96.5" width="18" height="14" fill="#86bbea"/>
<path d="M803.5 96.5H812.5M803.5 103.5H812.5M812.5 89.5V96.5M821.5 89.5V96.5" fill="none" stroke="#444" stroke-width="1"/>
<path d="M812.5 96.5H830.5V110.5H812.5ZM812.5 103.5H830.5M821.5 96.5V110.5" fill="none" stroke="#1e8ad6" stroke-width="1"/>
<g transform="translate(803,89)"><path d="M27.9 6.7Q30.6 5.9 30.8 9.6L17.1 21.3L15.3 19.3Z" fill="#f6f6f6" stroke="#4a4a4a" stroke-width="1.1" stroke-linejoin="round"/><path d="M15.3 19.3L17.1 21.3Q17.7 24.6 14.4 26.5Q11 28 7.6 24.9Q10.6 24.9 11.6 22.5Q12.8 19.2 15.3 19.3Z" fill="#5ea3e3" stroke="#2b82d4" stroke-width="0.8" stroke-linejoin="round"/></g>
<path d="M830.15 141.50L831.90 143.35L833.65 141.50" fill="none" stroke="#3b3b3b" stroke-width="1.1" stroke-linecap="round" stroke-linejoin="round"/>
<rect x="857.5" y="89.5" width="27" height="21" fill="#fff" stroke="#444" stroke-width="1"/>
<path d="M857.5 94.5H884.5M857.5 105.5H884.5M862.5 89.5V110.5M879.5 89.5V110.5" fill="none" stroke="#444" stroke-width="1"/>
<rect x="862.5" y="94.5" width="17" height="11" fill="#86bbea" stroke="#1e8ad6" stroke-width="1"/>
<g transform="translate(856.8,89)"><path d="M27.9 6.7Q30.6 5.9 30.8 9.6L17.1 21.3L15.3 19.3Z" fill="#f6f6f6" stroke="#4a4a4a" stroke-width="1.1" stroke-linejoin="round"/><path d="M15.3 19.3L17.1 21.3Q17.7 24.6 14.4 26.5Q11 28 7.6 24.9Q10.6 24.9 11.6 22.5Q12.8 19.2 15.3 19.3Z" fill="#5ea3e3" stroke="#2b82d4" stroke-width="0.8" stroke-linejoin="round"/></g>
<path d="M884.65 141.50L886.50 143.35L888.35 141.50" fill="none" stroke="#3b3b3b" stroke-width="1.1" stroke-linecap="round" stroke-linejoin="round"/>
<path d="M914.5 90.5V86.5H929.5V90.5M914.5 95.5V99.5H929.5V95.5M919.5 86.5V90.5M924.5 86.5V90.5M919.5 95.5V99.5M924.5 95.5V99.5M914.5 90.5H921M914.5 95.5H921" fill="none" stroke="#3b3b3b" stroke-width="1"/>
<rect x="921.5" y="90.5" width="8" height="5" fill="#86bbea" stroke="#1a78c8" stroke-width="1.2"/>
<path d="M925 90.5V95.5" stroke="#1a78c8" stroke-width="1"/>
<rect x="913.5" y="91.2" width="7.4" height="3.6" fill="#fdfdfd"/>
<path d="M921.2 93H914.6M917.1 90.5L914.6 93L917.1 95.5" fill="none" stroke="#1e8ad6" stroke-width="1.3" stroke-linecap="round" stroke-linejoin="round"/>
<path d="M914.5 116.5V112.5H929.5V116.5M914.5 121.5V125.5H929.5V121.5M919.5 112.5V116.5M924.5 112.5V116.5M919.5 121.5V125.5M924.5 121.5V125.5M914.5 119H917.5" fill="none" stroke="#3b3b3b" stroke-width="1"/>
<rect x="917.7" y="116.5" width="5" height="5" fill="#86bbea" stroke="#1a78c8" stroke-width="1.2"/>
<path d="M924.7 116.8L929.4 121.5M929.4 116.8L924.7 121.5" fill="none" stroke="#e3262e" stroke-width="1.2" stroke-linecap="round"/>
<path d="M917.3 138.5H926.9M917.5 137V140M926.5 137V140" fill="none" stroke="#1e8ad6" stroke-width="1"/>
<path d="M916.5 139.5H914.5V152.5H929.5V139.5H927.5M914.5 144H929.5M914.5 148.5H929.5M918.5 141.5V152.5M925.5 141.5V152.5" fill="none" stroke="#3b3b3b" stroke-width="1"/>
<rect x="918.5" y="143.8" width="7.2" height="4.8" fill="#86bbea" stroke="#1a78c8" stroke-width="1.3"/>
<path d="M91.35 196.70L95.50 201.35L99.65 196.70" fill="none" stroke="#3b3b3b" stroke-width="1.2" stroke-linecap="round" stroke-linejoin="round"/>
<rect x="116" y="193" width="2" height="2" fill="#222"/>
<rect x="116" y="197" width="2" height="2" fill="#222"/>
<rect x="116" y="201" width="2" height="2" fill="#222"/>
<path d="M134.2 192.2L145.8 203.8M145.8 192.2L134.2 203.8" fill="none" stroke="#a6a6a6" stroke-width="1"/>
<path d="M156.2 197.8L161.4 202.8L171.8 192.4" fill="none" stroke="#a6a6a6" stroke-width="1"/>
<text x="181.8" y="203.2" font-family="Liberation Serif, serif" font-style="italic" font-size="17.5" fill="#2b2b2b" stroke="#2b2b2b" stroke-width="0.35" letter-spacing="-0.3">fx</text>
</svg>
<div id="uitext">
<span class="t" style="left:45.10px;top:17px;font-size:11.6px;line-height:11.6px;letter-spacing:-0.347px;color:#1c1c1c">AutoSave</span>
<span class="t" style="left:122.70px;top:17px;font-size:11.6px;line-height:11.6px;letter-spacing:-0.015px;color:#1c1c1c">Off</span>
<span class="t" style="left:302.40px;top:18px;font-size:12.6px;line-height:12.6px;letter-spacing:-0.430px;color:#1c1c1c">template_import_user_organization_en...</span>
<span class="t" style="left:608.20px;top:18px;font-size:12.6px;line-height:12.6px;letter-spacing:-0.340px;color:#5c5c5c">Search</span>
<span class="t" style="left:18.50px;top:57px;font-size:12.9px;line-height:12.9px;letter-spacing:-0.534px;color:#1c1c1c">File</span>
<span class="t" style="left:64.30px;top:57px;font-size:12.9px;line-height:12.9px;letter-spacing:0.695px;color:#1c1c1c;-webkit-text-stroke:0.45px #1c1c1c">Home</span>
<span class="t" style="left:120.00px;top:57px;font-size:12.9px;line-height:12.9px;letter-spacing:-0.032px;color:#1c1c1c">Insert</span>
<span class="t" style="left:175.00px;top:57px;font-size:12.9px;line-height:12.9px;letter-spacing:-0.081px;color:#1c1c1c">Page Layout</span>
<span class="t" style="left:268.50px;top:57px;font-size:12.9px;line-height:12.9px;letter-spacing:0.032px;color:#1c1c1c">Formulas</span>
<span class="t" style="left:342.00px;top:57px;font-size:12.9px;line-height:12.9px;letter-spacing:-0.020px;color:#1c1c1c">Data</span>
<span class="t" style="left:390.00px;top:57px;font-size:12.9px;line-height:12.9px;letter-spacing:-0.391px;color:#1c1c1c">Review</span>
<span class="t" style="left:451.50px;top:57px;font-size:12.9px;line-height:12.9px;letter-spacing:-0.633px;color:#1c1c1c">View</span>
<span class="t" style="left:500.00px;top:57px;font-size:12.9px;line-height:12.9px;letter-spacing:0.071px;color:#1c1c1c">Automate</span>
<span class="t" style="left:577.50px;top:57px;font-size:12.9px;line-height:12.9px;letter-spacing:0.219px;color:#1c1c1c">Help</span>
<span class="t" style="left:24.90px;top:122px;font-size:11.6px;line-height:11.6px;letter-spacing:-0.525px;color:#1c1c1c">Paste</span>
<span class="t" style="left:25.60px;top:161px;font-size:12px;line-height:12px;letter-spacing:-0.149px;color:#303030">Clipboard</span>
<span class="t" style="left:120.30px;top:95px;font-size:12.7px;line-height:12.7px;letter-spacing:-0.273px;color:#1c1c1c">Calibri</span>
<span class="t" style="left:245.80px;top:95px;font-size:12.7px;line-height:12.7px;letter-spacing:0.000px;color:#1c1c1c;transform:scaleX(0.8110);transform-origin:0 0">12</span>
<span class="t" style="left:207.00px;top:161px;font-size:12px;line-height:12px;letter-spacing:-0.459px;color:#303030">Font</span>
<span class="t" style="left:409.70px;top:161px;font-size:12px;line-height:12px;letter-spacing:-0.266px;color:#303030">Alignment</span>
<span class="t" style="left:553.70px;top:95px;font-size:12.7px;line-height:12.7px;letter-spacing:-0.886px;color:#1c1c1c">General</span>
<span class="t" style="left:594.80px;top:161px;font-size:12px;line-height:12px;letter-spacing:-0.457px;color:#303030">Number</span>
<span class="t" style="left:718.50px;top:121px;font-size:12px;line-height:12px;letter-spacing:0.192px;color:#1c1c1c">Conditional</span>
<span class="t" style="left:714.70px;top:137px;font-size:12px;line-height:12px;letter-spacing:0.114px;color:#1c1c1c">Formatting</span>
<span class="t" style="left:791.30px;top:121px;font-size:12px;line-height:12px;letter-spacing:-0.314px;color:#1c1c1c">Format as</span>
<span class="t" style="left:798.70px;top:137px;font-size:12px;line-height:12px;letter-spacing:-0.678px;color:#1c1c1c">Table</span>
<span class="t" style="left:861.60px;top:121px;font-size:12px;line-height:12px;letter-spacing:-0.369px;color:#1c1c1c">Cell</span>
<span class="t" style="left:850.20px;top:137px;font-size:12px;line-height:12px;letter-spacing:-0.596px;color:#1c1c1c">Styles</span>
<span class="t" style="left:788.60px;top:161px;font-size:12px;line-height:12px;letter-spacing:-0.956px;color:#303030">Styles</span>
<span class="t" style="left:933.80px;top:88px;font-size:12px;line-height:12px;letter-spacing:-0.300px;color:#1c1c1c">Insert</span>
<span class="t" style="left:934.80px;top:114px;font-size:12px;line-height:12px;letter-spacing:-0.600px;color:#1c1c1c">Delete</span>
<span class="t" style="left:934.80px;top:140px;font-size:12px;line-height:12px;letter-spacing:-1.100px;color:#1c1c1c">Format</span>
<span class="t" style="left:939.60px;top:161px;font-size:12px;line-height:12px;letter-spacing:-0.300px;color:#303030">Cells</span>
<span class="t" style="left:12.04px;top:191px;font-size:14.5px;line-height:14.5px;letter-spacing:0.000px;color:#1c1c1c;transform:scaleX(0.7618);transform-origin:0 0">E4</span>
</div>
</div>
</body>
</html>
